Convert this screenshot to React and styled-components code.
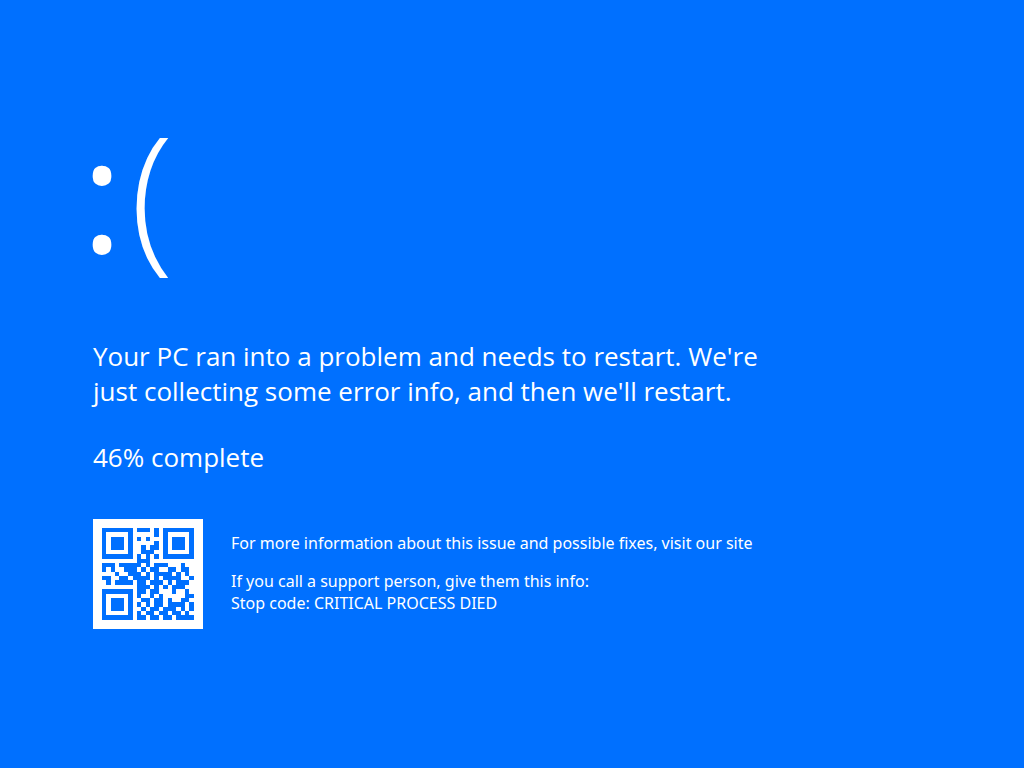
import React from 'react';
import styled, { createGlobalStyle } from 'styled-components';

const GlobalStyle = createGlobalStyle`
  body {
    margin: 0;
    background: #0070ff;
    color: #fff;
    font-family: "Open Sans", "Noto Sans", sans-serif;
  }
`;

const Screen = styled.main`
  box-sizing: border-box;
  min-height: 100vh;
  padding: 101px 93px 0;
`;

const Face = styled.div`
  display: flex;
  gap: 7px;
  margin-left: -12px;
  font-size: 160px;
  line-height: 180px;
`;

const Mouth = styled.span`
  font-weight: 300;
`;

const Message = styled.h1`
  max-width: 680px;
  margin: 58px 0 0;
  font-size: 26px;
  font-weight: 400;
  line-height: 35px;
`;

const Progress = styled.p`
  margin: 31px 0 0;
  font-size: 26px;
  line-height: 35px;
`;

const Support = styled.section`
  display: flex;
  align-items: flex-start;
  gap: 28px;
  margin-top: 44px;
`;

const QrCode = styled.svg`
  flex: none;
  width: 110px;
  height: 110px;
  background: #fff;
`;

const Details = styled.div`
  display: grid;
  gap: 16px;
  padding-top: 13px;
`;

const Detail = styled.p`
  margin: 0;
  font-family: "Noto Sans", "Open Sans", sans-serif;
  font-size: 16px;
  line-height: 22px;
`;

const modules = [
  '#######.###.#.#######',
  '#.....#.....#.#.....#',
  '#.###.#.#.#...#.###.#',
  '#.###.#.....#.#.###.#',
  '#.###.#..#.##.#.###.#',
  '#.....#..###..#.....#',
  '#######.#.#.#.#######',
  '........###..........',
  '###.#####.#.###...#..',
  '#.#..###.#.##..##.##.',
  '...#..###.#.####.#.#.',
  '##..##.####.#.####..#',
  '.#.####.##.###.#.###.',
  '........###.#.#.###..',
  '#######.##.##...#..#.',
  '#.....#.#..#.#.....##',
  '#.###.#..##.##.#..##.',
  '#.###.#.#.#.##.####.#',
  '#.###.#..#.##.###.#.#',
  '#.....#.#.##.##.##.#.',
  '#######.##.##.##.####',
];

function SupportQr() {
  return (
    <QrCode viewBox="0 0 110 110" role="img" aria-label="Support QR code">
      <g transform="translate(9 9) scale(4.37)" fill="#0070ff" shapeRendering="crispEdges">
        {modules.flatMap((row, y) =>
          [...row].map((cell, x) =>
            cell === '#' ? <rect key={`${x}-${y}`} x={x} y={y} width="1" height="1" /> : null
          )
        )}
      </g>
    </QrCode>
  );
}

export default function App() {
  return (
    <>
      <GlobalStyle />
      <Screen>
        <Face>
          <span>:</span>
          <Mouth>(</Mouth>
        </Face>
        <Message>
          Your PC ran into a problem and needs to restart. We're
          <br />
          just collecting some error info, and then we'll restart.
        </Message>
        <Progress>46% complete</Progress>
        <Support>
          <SupportQr />
          <Details>
            <Detail>For more information about this issue and possible fixes, visit our site</Detail>
            <Detail>
              If you call a support person, give them this info:
              <br />
              Stop code: CRITICAL PROCESS DIED
            </Detail>
          </Details>
        </Support>
      </Screen>
    </>
  );
}
